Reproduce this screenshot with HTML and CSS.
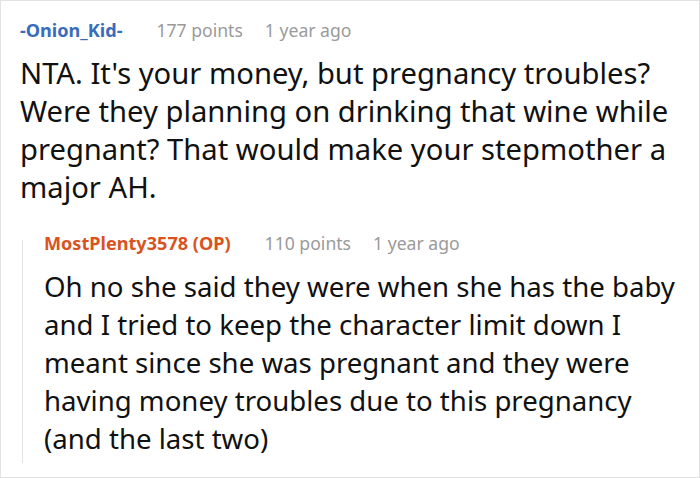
FILE: index.html
```html
<!DOCTYPE html>
<html lang="en">
<head>
<meta charset="utf-8">
<title>Comment</title>
<link rel="stylesheet" href="styles.css">
</head>
<body>
<div class="card">
  <div class="meta">
    <span class="author">-Onion_Kid-</span>
    <span class="info">177 points</span>
    <span class="info">1 year ago</span>
  </div>
  <p class="text">NTA. It's your money, but pregnancy troubles? Were they planning on drinking that wine while pregnant? That would make your stepmother a major AH.</p>
  <div class="reply">
    <div class="meta">
      <span class="author op">MostPlenty3578 (OP)</span>
      <span class="info">110 points</span>
      <span class="info">1 year ago</span>
    </div>
    <p class="text reply-text">Oh no she said they were when she has the baby and I tried to keep the character limit down I meant since she was pregnant and they were having money troubles due to this pregnancy (and the last two)</p>
  </div>
</div>
</body>
</html>
```
FILE: styles.css
```css
html, body {
  margin: 0;
  padding: 0;
  background: #fff;
}
.card {
  box-sizing: border-box;
  width: 700px;
  height: 478px;
  border: 1px solid #e2e2e2;
  padding: 17px 12px 0 19px;
  font-family: "Noto Sans", "Open Sans", sans-serif;
  color: #111;
}
.meta {
  display: flex;
  align-items: baseline;
  gap: 22px;
  font-size: 17.6px;
  line-height: 24px;
}
.author {
  font-weight: 700;
  font-size: 18.1px;
  color: #3a6cbc;
  margin-right: 12px;
}
.author.op {
  color: #d9531e;
}
.info {
  color: #9a9a9a;
}
.text {
  margin: 12px 0 0 0;
  font-size: 29.2px;
  line-height: 38px;
}
.reply-text {
  font-size: 27.6px;
}
.reply {
  position: relative;
  margin: 25px 0 0 2px;
  padding-left: 22px;
}
.reply::before {
  content: "";
  position: absolute;
  left: 0;
  top: 9px;
  bottom: -6px;
  width: 1px;
  background: #e4e4e4;
}
```
